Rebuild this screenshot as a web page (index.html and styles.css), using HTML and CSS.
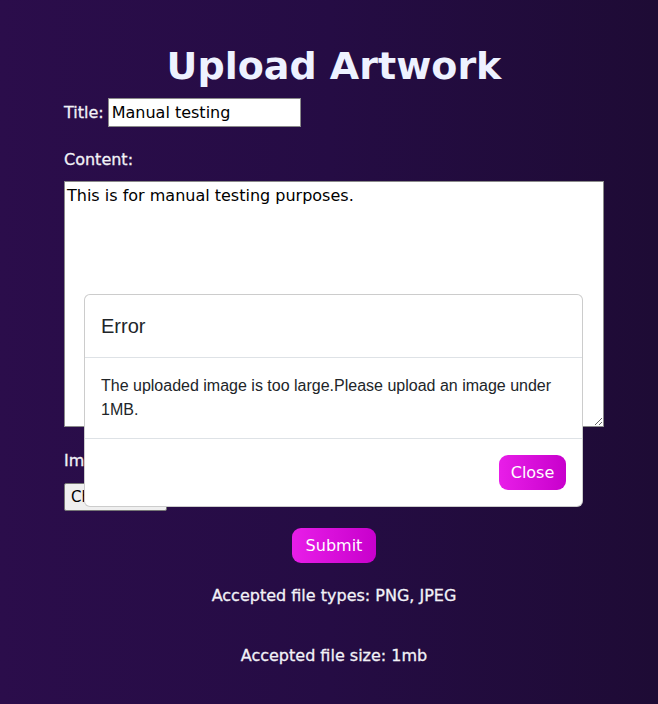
FILE: index.html
```html
<!DOCTYPE html>
<html lang="en">
<head>
<meta charset="utf-8">
<title>Upload Artwork</title>
<link rel="stylesheet" href="styles.css">
</head>
<body>
<main class="page">
  <h1 class="heading">Upload Artwork</h1>
  <form class="form">
    <div class="row">
      <label class="label" for="title">Title:</label>
      <input class="text-input" id="title" type="text" value="Manual testing">
    </div>
    <div class="field field-content">
      <label class="label" for="content">Content:</label>
      <textarea class="textarea" id="content">This is for manual testing purposes.</textarea>
    </div>
    <div class="field field-image">
      <label class="label" for="image">Image:</label>
      <span class="file-btn">Choose File</span>
    </div>
    <div class="actions">
      <button type="button" class="grad-btn submit">Submit</button>
      <p class="note note-types">Accepted file types: PNG, JPEG</p>
      <p class="note note-size">Accepted file size: 1mb</p>
    </div>
  </form>
</main>

<div class="modal">
  <div class="modal-header">Error</div>
  <div class="modal-body">The uploaded image is too large.Please upload an image under 1MB.</div>
  <div class="modal-footer">
    <button type="button" class="grad-btn close">Close</button>
  </div>
</div>
</body>
</html>
```

FILE: styles.css
```css
* { box-sizing: border-box; }

html, body {
  margin: 0;
  height: 100%;
}

body {
  background: linear-gradient(to right, #2b0d4b 0%, #250c44 50%, #1e0b35 100%);
  color: #ffffff;
  font-family: "DejaVu Sans", sans-serif;
  position: relative;
  overflow: hidden;
}

.page {
  padding: 0 54px 0 64px;
}

.heading {
  margin: 0 0 4px;
  padding-top: 38px;
  text-align: center;
  font-size: 38px;
  font-weight: 700;
  line-height: 56px;
  color: #eef2ff;
}

.form {
  display: flex;
  flex-direction: column;
}

.label {
  font-size: 16px;
  line-height: 20px;
  font-weight: 500;
  color: #f2f2f7;
  -webkit-text-stroke: 0.3px #f2f2f7;
}

.row {
  display: flex;
  align-items: center;
  gap: 4px;
  height: 29px;
}

.text-input {
  width: 193px;
  height: 29px;
  border: 1px solid #8a8a8a;
  padding: 0 3px;
  font-family: "DejaVu Sans", sans-serif;
  font-size: 16px;
  color: #000;
  background: #fff;
}

.field {
  display: flex;
  flex-direction: column;
  align-items: flex-start;
}

.field-content {
  margin-top: 23px;
  gap: 11px;
}

.field-image {
  margin-top: 24px;
  gap: 12px;
}

.textarea {
  display: block;
  width: 540px;
  height: 246px;
  border: 1px solid #8a8a8a;
  padding: 4px 2px;
  font-family: "DejaVu Sans", sans-serif;
  font-size: 16px;
  color: #000;
  background: #fff;
  resize: vertical;
}

.file-btn {
  display: inline-flex;
  align-items: center;
  width: 103px;
  height: 28px;
  padding: 0 6px;
  background: #efefef;
  border: 1px solid #767676;
  border-radius: 2px;
  color: #000;
  font-size: 15px;
}

.actions {
  display: flex;
  flex-direction: column;
  align-items: center;
  margin-top: 17px;
}

.grad-btn {
  border: none;
  padding: 0;
  color: #fff;
  font-family: "DejaVu Sans", sans-serif;
  font-size: 16px;
  background: linear-gradient(to right, #e81ee8, #c800cc);
  border-radius: 9px;
  cursor: pointer;
}

.submit {
  width: 84px;
  height: 35px;
}

.note {
  margin: 0;
  font-size: 16px;
  line-height: 20px;
  font-weight: 500;
  color: #f2f2f7;
  -webkit-text-stroke: 0.3px #f2f2f7;
}

.note-types { margin-top: 23px; }
.note-size { margin-top: 40px; }

.modal {
  position: absolute;
  left: 84px;
  top: 294px;
  width: 499px;
  background: #fff;
  border: 1px solid rgba(0, 0, 0, 0.2);
  border-radius: 6px;
  color: #212529;
  font-family: "Liberation Sans", sans-serif;
}

.modal-header {
  padding: 16px;
  font-size: 20px;
  font-weight: 500;
  line-height: 30px;
  border-bottom: 1px solid #dee2e6;
}

.modal-body {
  padding: 16px;
  font-size: 16px;
  line-height: 24px;
}

.modal-footer {
  display: flex;
  justify-content: flex-end;
  padding: 12px;
  border-top: 1px solid #dee2e6;
}

.close {
  margin: 4px;
  width: 67px;
  height: 35px;
}
```
